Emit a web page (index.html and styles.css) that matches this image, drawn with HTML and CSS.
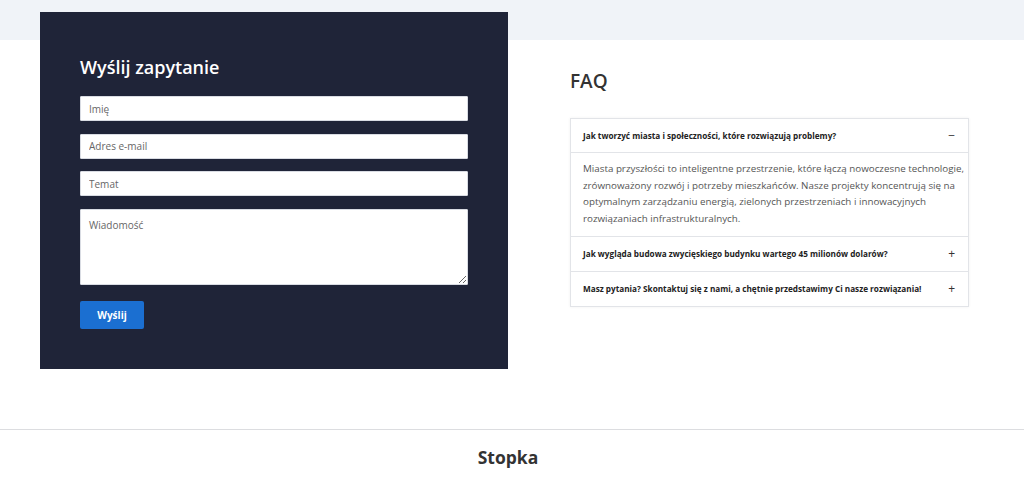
FILE: index.html
```html
<!DOCTYPE html>
<html lang="pl">
<head>
<meta charset="utf-8">
<title>Kontakt</title>
<link rel="stylesheet" href="styles.css">
</head>
<body>
<main class="contact">
  <section class="form-panel">
    <h2 class="form-title">Wyślij zapytanie</h2>
    <form class="form">
      <input class="field" type="text" placeholder="Imię">
      <input class="field" type="email" placeholder="Adres e-mail">
      <input class="field" type="text" placeholder="Temat">
      <textarea class="field area" placeholder="Wiadomość"></textarea>
      <button class="btn" type="button">Wyślij</button>
    </form>
  </section>
  <section class="faq">
    <h2 class="faq-title">FAQ</h2>
    <div class="accordion">
      <div class="item open">
        <div class="q"><span>Jak tworzyć miasta i społeczności, które rozwiązują problemy?</span><span class="sign">−</span></div>
        <div class="a">Miasta przyszłości to inteligentne przestrzenie, które łączą nowoczesne technologie, zrównoważony rozwój i potrzeby mieszkańców. Nasze projekty koncentrują się na optymalnym zarządzaniu energią, zielonych przestrzeniach i innowacyjnych rozwiązaniach infrastrukturalnych.</div>
      </div>
      <div class="item">
        <div class="q"><span>Jak wygląda budowa zwycięskiego budynku wartego 45 milionów dolarów?</span><span class="sign">+</span></div>
      </div>
      <div class="item">
        <div class="q"><span>Masz pytania? Skontaktuj się z nami, a chętnie przedstawimy Ci nasze rozwiązania!</span><span class="sign">+</span></div>
      </div>
    </div>
  </section>
</main>
<footer class="footer">
  <h3 class="footer-title">Stopka</h3>
</footer>
</body>
</html>
```
FILE: styles.css
```css
* { box-sizing: border-box; }
html, body { margin: 0; padding: 0; }
body {
  font-family: "Open Sans", "Noto Sans", sans-serif;
  background: #fff;
  color: #333;
}
.contact {
  display: flex;
  align-items: flex-start;
  gap: 62px;
  padding: 12px 0 60px 40px;
  background: linear-gradient(#f0f3f8 0, #f0f3f8 40px, #fff 40px);
}
.form-panel {
  width: 468px;
  height: 357px;
  background: #1f2438;
  padding: 41px 40px 0 40px;
}
.form-title {
  margin: 0 0 15px;
  color: #fff;
  font-size: 18px;
  font-weight: 600;
  line-height: 28px;
}
.form {
  display: flex;
  flex-direction: column;
  align-items: flex-start;
  gap: 12.5px;
}
.field {
  width: 388px;
  height: 25px;
  border: 1px solid #d9dce3;
  border-radius: 1px;
  background: #fff;
  font-family: inherit;
  font-size: 10px;
  padding: 0 8px;
  color: #333;
  outline: none;
}
.field::placeholder { color: #666; }
.area {
  height: 76px;
  padding: 8px;
  resize: vertical;
}
.btn {
  margin-top: 4px;
  width: 64px;
  height: 28px;
  border: 0;
  border-radius: 2px;
  background: #1b6fd1;
  color: #fff;
  font-family: inherit;
  font-size: 10px;
  font-weight: 700;
}
.faq {
  width: 399px;
  padding-top: 55px;
}
.faq-title {
  margin: 0 0 23px;
  font-size: 19px;
  font-weight: 600;
  line-height: 28px;
  color: #333;
}
.accordion {
  border: 1px solid #e2e4e8;
  box-shadow: 0 0 3px rgba(0,0,0,0.06);
}
.item + .item { border-top: 1px solid #e2e4e8; }
.q {
  display: flex;
  justify-content: space-between;
  align-items: center;
  height: 34px;
  padding: 0 13px 0 12px;
  font-size: 8.2px;
  font-weight: 700;
  color: #222;
}
.sign { font-size: 12px; font-weight: 400; color: #333; }
.item.open .q { border-bottom: 1px solid #e2e4e8; }
.a {
  padding: 8px 3px 8px 12px;
  font-size: 9.8px;
  line-height: 16.7px;
  color: #555;
}
.footer {
  border-top: 1px solid #dcdde0;
  text-align: center;
  padding: 15px 0 20px;
}
.footer-title {
  margin: 0;
  font-size: 17.5px;
  font-weight: 700;
  color: #333;
  transform: translateX(-4px);
}
```
